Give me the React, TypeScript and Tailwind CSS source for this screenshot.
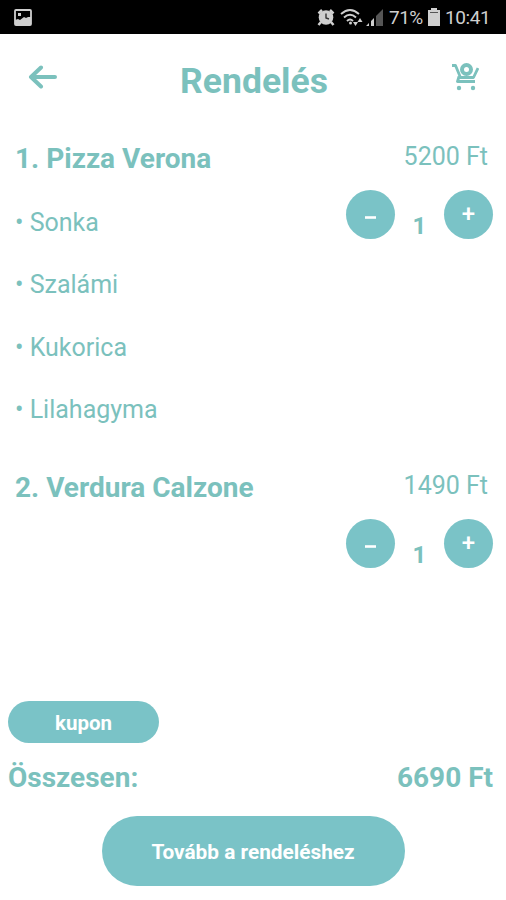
import { useState } from "react";

const items = [
  {
    name: "Pizza Verona",
    price: 5200,
    toppings: ["Sonka", "Szalámi", "Kukorica", "Lilahagyma"],
  },
  { name: "Verdura Calzone", price: 1490, toppings: [] },
];

function StatusBar() {
  return (
    <div className="flex h-[34px] items-center bg-black pl-[14px] pr-[15px] text-[#cfcfcf]">
      <svg className="h-[17px] w-[18px]" viewBox="0 0 18 17">
        <rect x="1" y="1" width="16" height="15" rx="1" fill="none" stroke="currentColor" strokeWidth="1.800" />
        <path d="M1 16v-5l3-1 2 1 4-3 2 1 2-1 3 0v8z" fill="currentColor" />
        <rect x="4" y="4" width="3" height="3" fill="currentColor" />
      </svg>
      <svg className="ml-auto h-[18px] w-[18px]" viewBox="0 0 18 18" fill="none" stroke="currentColor" strokeWidth="2">
        <circle cx="9" cy="9.500" r="7.300" fill="currentColor" stroke="none" />
        <path d="M1.500 5.500L5 2M16.500 5.500L13 2M4 14l-2.500 3M14 14l2.500 3" strokeWidth="2.500" />
        <path d="M9 5.500v4.500l3 1" stroke="#333" strokeWidth="1.400" />
      </svg>
      <svg className="ml-[5px] h-[18px] w-[23px]" viewBox="0 0 23 18" fill="none" stroke="currentColor" strokeWidth="1.900">
        <path d="M1 6Q10-2 19 6M4 9.500q6-5.500 12 0M7 13q3-3 6 0" />
        <circle cx="10.500" cy="15" r="1.500" fill="currentColor" stroke="none" />
        <path d="M13 14l2.500 4 2.500-4zM17.500 14l2.500-4 2.500 4z" fill="currentColor" stroke="none" />
      </svg>
      <svg className="ml-[3px] h-[18px] w-[17px]" viewBox="0 0 17 18">
        <path d="M10 8l7-7v17h-7z" fill="#555" />
        <path d="M0 18l3-3v3zM5 18v-5l3-3v8z" fill="currentColor" />
      </svg>
      <span className="ml-[6px] w-[34px] whitespace-nowrap pt-[3px] text-[19px] tracking-[-0.500px]">71%</span>
      <svg className="ml-[5px] h-[18px] w-[12px]" viewBox="0 0 12 18">
        <path d="M3 0h6v2h3v16H0V2h3z" fill="currentColor" />
        <path d="M2 4.500h8" stroke="#555" />
      </svg>
      <span className="ml-[5px] w-[46px] whitespace-nowrap pt-[3px] text-[19px] tracking-[-0.400px]">10:41</span>
    </div>
  );
}

export default function App() {
  const [counts, setCounts] = useState([1, 1]);
  const change = (i: number, by: number) =>
    setCounts(counts.map((c, n) => (n === i ? Math.max(0, c + by) : c)));

  return (
    <div className="flex h-[900px] w-[506px] flex-col bg-white font-['Roboto',sans-serif] text-[#7bc1bd]">
      <StatusBar />
      <header className="flex h-[92px] items-center justify-between pb-[7px] pl-[28px] pr-[27px]">
        <svg className="h-[24px] w-[30px]" viewBox="0 0 30 24" fill="none" stroke="currentColor" strokeWidth="4" strokeLinecap="round" strokeLinejoin="round">
          <path d="M27 12H3M13 2.500L3 12l10 9.500" />
        </svg>
        <h1 className="mr-[2px] mt-[10px] text-[35.500px] font-bold">Rendelés</h1>
        <svg className="h-[30px] w-[27px]" viewBox="0 0 27 30" fill="none" stroke="currentColor" strokeWidth="2.800">
          <path d="M0 3.500h3.500l5 12h13L26 6M7 14.500l-1.500 5H23" strokeLinejoin="round" />
          <circle cx="14.500" cy="7.500" r="4.500" strokeWidth="4" />
          <circle cx="7" cy="26" r="2.200" fill="currentColor" stroke="none" />
          <circle cx="21" cy="26" r="2.200" fill="currentColor" stroke="none" />
        </svg>
      </header>
      <main className="flex-1">
        {items.map((item, i) => (
          <section key={item.name} className={i === 0 ? "flex h-[329px] justify-between pl-[15px] pr-[13px]" : "flex justify-between pl-[15px] pr-[13px]"}>
            <div className="pt-[17px]">
              <h2 className="text-[28px] font-bold leading-[32px]">{i + 1}. {item.name}</h2>
              <ul className="pt-[17px]">
                {item.toppings.map(t => (
                  <li key={t} className="h-[62.300px] pt-[16px] text-[25px] leading-[30px]">• {t}</li>
                ))}
              </ul>
            </div>
            <div className="w-[147px] pt-[16px]">
              <p className="pr-[5px] text-right text-[25px] leading-[30px]">{item.price} Ft</p>
              <div className="mt-[16px] flex items-center justify-between">
                <button className="flex size-[49px] items-center justify-center rounded-full bg-[#7ac3c7] text-white" aria-label="-" onClick={() => change(i, -1)}>
                  <svg className="mt-[6px] h-[3px] w-[11px]" viewBox="0 0 11 3">
                    <path d="M0 1.500h11" stroke="currentColor" strokeWidth="2.600" />
                  </svg>
                </button>
                <span className="mt-[24px] text-[24px] font-bold leading-[28px]">{counts[i]}</span>
                <button className="flex size-[49px] items-center justify-center rounded-full bg-[#7ac3c7] text-[24px] font-medium text-white" onClick={() => change(i, 1)}>+</button>
              </div>
            </div>
          </section>
        ))}
      </main>
      <footer className="flex h-[200px] flex-col px-[8px] pt-px">
        <button className="h-[42px] w-[151px] rounded-full bg-[#7ac3c7] pt-[3px] text-[20.500px] font-bold text-white">kupon</button>
        <div className="mt-[19px] flex justify-between pr-[5px] text-[28px] font-bold leading-[32px]">
          <span>Összesen:</span>
          <span>6690 Ft</span>
        </div>
        <button className="mt-[22px] h-[70px] w-[303px] self-center rounded-full bg-[#7ac3c7] pt-[4px] text-[20.800px] font-bold text-white">
          Tovább a rendeléshez
        </button>
      </footer>
    </div>
  );
}
